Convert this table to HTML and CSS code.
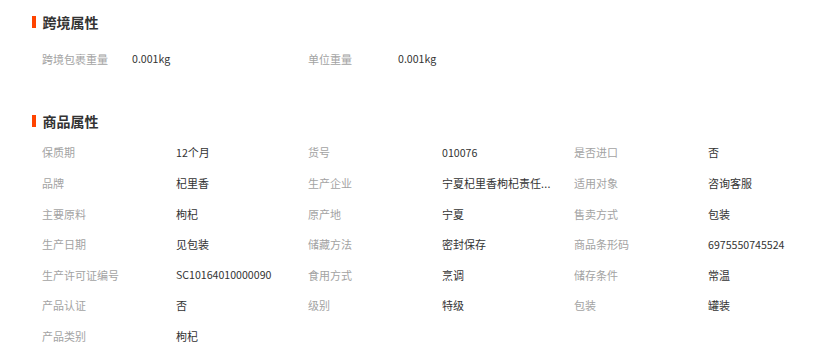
FILE: index.html
```html
<!DOCTYPE html>
<html lang="zh-CN">
<head>
<meta charset="utf-8">
<title>商品属性</title>
<link rel="stylesheet" href="styles.css">
</head>
<body>
<div class="page">
  <section class="section section-cross">
    <h2 class="title"><span class="bar"></span>跨境属性</h2>
    <div class="grid grid-cross">
      <div class="item"><span class="label">跨境包裹重量</span><span class="value num">0.001kg</span></div>
      <div class="item"><span class="label">单位重量</span><span class="value num">0.001kg</span></div>
    </div>
  </section>
  <section class="section section-goods">
    <h2 class="title"><span class="bar"></span>商品属性</h2>
    <div class="grid grid-goods">
      <div class="item"><span class="label">保质期</span><span class="value"><span class="num">12</span>个月</span></div>
      <div class="item"><span class="label">货号</span><span class="value num">010076</span></div>
      <div class="item"><span class="label">是否进口</span><span class="value">否</span></div>

      <div class="item"><span class="label">品牌</span><span class="value">杞里香</span></div>
      <div class="item"><span class="label">生产企业</span><span class="value">宁夏杞里香枸杞责任<span class="dots">...</span></span></div>
      <div class="item"><span class="label">适用对象</span><span class="value">咨询客服</span></div>

      <div class="item"><span class="label">主要原料</span><span class="value">枸杞</span></div>
      <div class="item"><span class="label">原产地</span><span class="value">宁夏</span></div>
      <div class="item"><span class="label">售卖方式</span><span class="value">包装</span></div>

      <div class="item"><span class="label">生产日期</span><span class="value">见包装</span></div>
      <div class="item"><span class="label">储藏方法</span><span class="value">密封保存</span></div>
      <div class="item"><span class="label">商品条形码</span><span class="value num">6975550745524</span></div>

      <div class="item"><span class="label">生产许可证编号</span><span class="value num">SC10164010000090</span></div>
      <div class="item"><span class="label">食用方式</span><span class="value">烹调</span></div>
      <div class="item"><span class="label">储存条件</span><span class="value">常温</span></div>

      <div class="item"><span class="label">产品认证</span><span class="value">否</span></div>
      <div class="item"><span class="label">级别</span><span class="value">特级</span></div>
      <div class="item"><span class="label">包装</span><span class="value">罐装</span></div>

      <div class="item"><span class="label">产品类别</span><span class="value">枸杞</span></div>
    </div>
  </section>
</div>
</body>
</html>
```

FILE: styles.css
```css
html, body {
  margin: 0;
  padding: 0;
  background: #ffffff;
}

body {
  font-family: "Noto Sans CJK SC", "Noto Sans", sans-serif;
  font-size: 11px;
  color: #333333;
}

.page {
  padding: 12px 0 0 32px;
  width: 798px;
}

.title {
  display: flex;
  align-items: center;
  gap: 6.5px;
  margin: 0;
  height: 20px;
  line-height: 20px;
  font-size: 14px;
  font-weight: bold;
  color: #333333;
}

.bar {
  display: block;
  width: 4px;
  height: 12px;
  background: #ff4400;
}

.grid {
  display: grid;
  grid-template-columns: repeat(3, 266px);
  grid-auto-rows: 30.6px;
  padding-left: 10px;
}

.section-cross .grid {
  margin-top: 11.7px;
}

.section-goods {
  margin-top: 37px;
}

.section-goods .grid {
  margin-top: 5.8px;
}

.item {
  display: flex;
  align-items: center;
  min-width: 0;
}

.label {
  flex: 0 0 134px;
  color: #a3a3a3;
  white-space: nowrap;
}

.grid-cross .label {
  flex-basis: 90px;
}

.value {
  color: #333333;
  white-space: nowrap;
}

.num {
  font-size: 10.6px;
}

.dots {
  font-size: 10.6px;
  letter-spacing: 0.3px;
}
```
